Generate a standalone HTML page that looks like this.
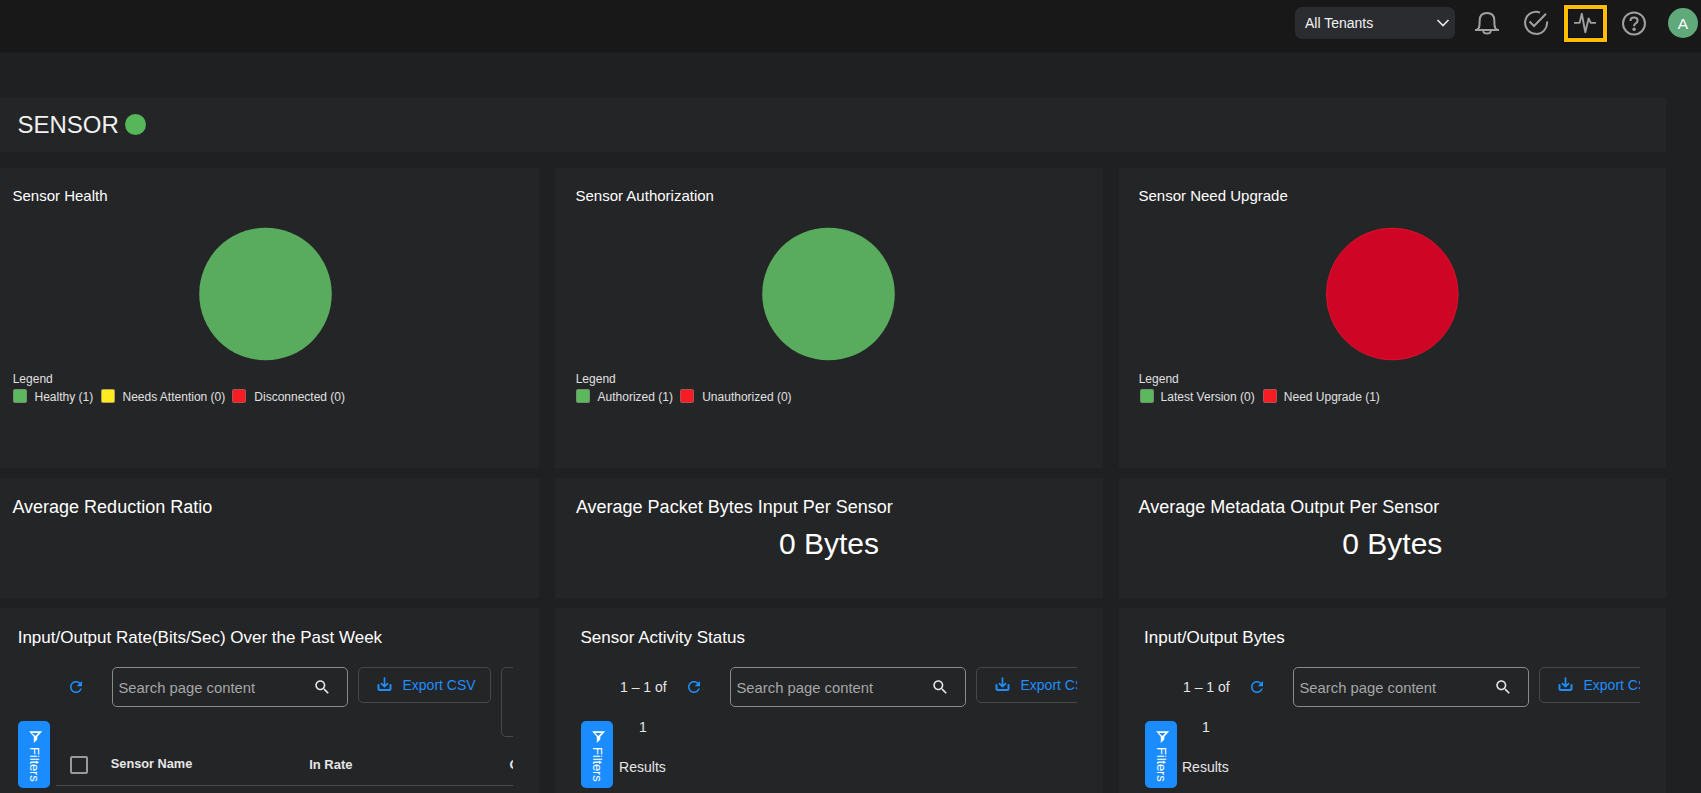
<!DOCTYPE html>
<html><head><meta charset="utf-8">
<style>
*{box-sizing:border-box;margin:0;padding:0}
html,body{width:1701px;height:793px;overflow:hidden;background:#1f2022;font-family:"Liberation Sans",sans-serif;color:#fff}
.a{position:absolute}
.t{position:absolute;white-space:nowrap;line-height:1}
#top{left:0;top:0;width:1701px;height:52px;background:#181818;box-shadow:0 1px 0 #1c1d1e}
#band{left:0;top:98px;width:1666px;height:54px;background:#242527}
.p{position:absolute;background:#242527;overflow:hidden}
.pie{position:absolute;border-radius:50%;width:133px;height:133px}
.sq{position:absolute;width:14px;height:14px;border:1px solid rgba(120,120,120,.6);border-radius:2px;top:388.5px}
.lg{font-size:12px;color:#e0e0e0}
.search{position:absolute;top:667px;width:236px;height:40px;border:1px solid #8a8a8a;border-radius:5px}
.exp{position:absolute;top:667px;height:36px;border:1px solid #46484c;border-radius:5px}
.filt{position:absolute;top:721px;width:32px;height:67px;background:#1b8cfe;border-radius:5px}
.blue{color:#1e8ffc}
</style></head><body>
<div id="top" class="a"></div>
<!-- tenant select -->
<div class="a" style="left:1295px;top:7px;width:160px;height:32px;background:#2b2c30;border-radius:7px"></div>
<div class="t" style="left:1305px;top:16px;font-size:14px;color:#f2f2f2">All Tenants</div>
<svg class="a" style="left:1435px;top:17px" width="16" height="12" viewBox="0 0 16 12"><path d="M2.5 3 L8 8.5 L13.5 3" fill="none" stroke="#e8e8e8" stroke-width="1.6"/></svg>
<!-- bell -->
<svg class="a" style="left:1465px;top:0px" width="40" height="40" viewBox="0 0 40 40"><path d="M10 30 H34 M11.5 30 Q14.3 28.8 14.5 25 L14.7 20 Q14.9 12.9 22 12.9 Q29.1 12.9 29.3 20 L29.5 25 Q29.7 28.8 32.5 30 M18.2 30.6 Q18.2 33.6 22 33.6 Q25.8 33.6 25.8 30.6" fill="none" stroke="#a0a0a0" stroke-width="2" stroke-linejoin="round"/></svg>
<!-- check circle -->
<svg class="a" style="left:1523px;top:10px" width="26" height="26" viewBox="0 0 26 26"><path d="M17 2.6 A11 11 0 1 0 24 11.5" fill="none" stroke="#a0a0a0" stroke-width="2"/><path d="M6.5 11.5 L11 16 L23 3.8" fill="none" stroke="#a0a0a0" stroke-width="2"/></svg>
<!-- pulse focused -->
<div class="a" style="left:1563px;top:4px;width:45px;height:39px;border:1px solid #0b0d18"></div>
<div class="a" style="left:1564px;top:5px;width:43px;height:37px;border:4px solid #ffbf00"></div><div class="a" style="left:1568px;top:9px;width:35px;height:29px;border:1px solid #0b0d1a"></div>
<svg class="a" style="left:1573px;top:12px" width="24" height="22" viewBox="0 0 24 22"><path d="M1 10.9 L6.6 10.9 L8.8 1.8 L12.3 20.2 L15.6 6.5 L17.8 10.9 L23 10.9" fill="none" stroke="#a0a0a0" stroke-width="1.9" stroke-linejoin="round"/></svg>
<!-- help -->
<svg class="a" style="left:1621px;top:10px" width="26" height="26" viewBox="0 0 26 26"><circle cx="13" cy="13.4" r="11" fill="none" stroke="#a0a0a0" stroke-width="2"/><path d="M9.5 10.9 Q9.5 7.5 13.1 7.5 Q16.6 7.5 16.6 10.5 Q16.6 12.3 14.7 13.3 Q13.1 14.1 13.1 16.3" fill="none" stroke="#a0a0a0" stroke-width="2"/><circle cx="13.1" cy="19.3" r="1.7" fill="#a0a0a0"/></svg>
<!-- avatar -->
<div class="a" style="left:1668px;top:8px;width:30px;height:30px;border-radius:50%;background:#5fa97b"></div>
<div class="t" style="left:1668px;top:15.5px;width:30px;text-align:center;font-size:15.5px;color:#fff">A</div>

<div id="band" class="a"></div>
<div class="t" style="left:17.5px;top:112.5px;font-size:24px;color:#f0f0f0">SENSOR</div>
<div class="a" style="left:125px;top:114px;width:21px;height:21px;border-radius:50%;background:#56b65a"></div>

<!-- row 1 -->
<div class="p" style="left:-8px;top:168px;width:547.33px;height:300px"></div>
<div class="p" style="left:555.33px;top:168px;width:547.33px;height:300px"></div>
<div class="p" style="left:1118.67px;top:168px;width:547.33px;height:300px"></div>

<div class="t" style="left:12.5px;top:187.9px;font-size:15px">Sensor Health</div>
<div class="t" style="left:575.5px;top:187.9px;font-size:15px">Sensor Authorization</div>
<div class="t" style="left:1138.5px;top:187.9px;font-size:15px">Sensor Need Upgrade</div>

<svg class="a" style="left:0;top:200px" width="1701" height="190" viewBox="0 200 1701 190"><circle cx="265.5" cy="294" r="66.3" fill="#59ab5d"/><circle cx="828.5" cy="294" r="66.3" fill="#59ab5d"/><circle cx="1392.3" cy="294" r="65.9" fill="#cf0526" stroke="#e3132b" stroke-width="0.8"/></svg>

<div class="t lg" style="left:12.7px;top:372.5px">Legend</div>
<div class="sq" style="left:12.5px;background:#5cb85c"></div>
<div class="t lg" style="left:34.5px;top:390.5px">Healthy (1)</div>
<div class="sq" style="left:100.5px;background:#ffeb1f"></div>
<div class="t lg" style="left:122.5px;top:390.5px">Needs Attention (0)</div>
<div class="sq" style="left:232.3px;background:#f51c24"></div>
<div class="t lg" style="left:254.3px;top:390.5px">Disconnected (0)</div>

<div class="t lg" style="left:575.7px;top:372.5px">Legend</div>
<div class="sq" style="left:575.6px;background:#5cb85c"></div>
<div class="t lg" style="left:597.6px;top:390.5px">Authorized (1)</div>
<div class="sq" style="left:680.2px;background:#f51c24"></div>
<div class="t lg" style="left:702.2px;top:390.5px">Unauthorized (0)</div>

<div class="t lg" style="left:1138.7px;top:372.5px">Legend</div>
<div class="sq" style="left:1139.6px;background:#5cb85c"></div>
<div class="t lg" style="left:1160.6px;top:390.5px">Latest Version (0)</div>
<div class="sq" style="left:1262.8px;background:#f51c24"></div>
<div class="t lg" style="left:1283.8px;top:390.5px">Need Upgrade (1)</div>

<!-- row 2 -->
<div class="p" style="left:-8px;top:478px;width:547.33px;height:120px"></div>
<div class="p" style="left:555.33px;top:478px;width:547.33px;height:120px"></div>
<div class="p" style="left:1118.67px;top:478px;width:547.33px;height:120px"></div>
<div class="t" style="left:12.4px;top:497.8px;font-size:18px">Average Reduction Ratio</div>
<div class="t" style="left:575.9px;top:497.8px;font-size:18px">Average Packet Bytes Input Per Sensor</div>
<div class="t" style="left:1138.5px;top:497.8px;font-size:18px">Average Metadata Output Per Sensor</div>
<div class="t" style="left:555.33px;width:547.33px;text-align:center;top:528.6px;font-size:30px">0 Bytes</div>
<div class="t" style="left:1118.67px;width:547.33px;text-align:center;top:528.6px;font-size:30px">0 Bytes</div>

<!-- row 3 -->
<div class="p" style="left:-8px;top:608px;width:547.33px;height:200px"></div>
<div class="p" style="left:555.33px;top:608px;width:547.33px;height:200px"></div>
<div class="p" style="left:1118.67px;top:608px;width:547.33px;height:200px"></div>
<div class="t" style="left:17.7px;top:628.6px;font-size:17px">Input/Output Rate(Bits/Sec) Over the Past Week</div>
<div class="t" style="left:580.5px;top:628.6px;font-size:17px">Sensor Activity Status</div>
<div class="t" style="left:1144px;top:628.6px;font-size:17px">Input/Output Bytes</div>

<!-- ROW3 -->
<div class="a" style="left:0;top:600px;width:513px;height:193px;overflow:hidden">
<div class="a" style="left:0;top:-600px;width:1701px;height:793px">
<svg class="a" style="left:67px;top:678px" width="18" height="18" viewBox="0 0 24 24"><path d="M17.65 6.35C16.2 4.9 14.21 4 12 4c-4.42 0-7.990 3.58-7.99 8s3.57 8 7.99 8c3.73 0 6.84-2.55 7.73-6h-2.08c-.82 2.33-3.04 4-5.65 4-3.310 0-6-2.69-6-6s2.69-6 6-6c1.66 0 3.14.69 4.22 1.78L13 11h7V4l-2.35 2.35z" fill="#1e8ffc"/></svg>
<div class="search" style="left:112px"></div><div class="t" style="left:118.5px;top:680.8px;font-size:14.8px;color:#a6a6a6">Search page content</div><svg class="a" style="left:313px;top:677.7px" width="18.5" height="18.5" viewBox="0 0 24 24"><path d="M15.5 14h-.79l-.28-.27C15.41 12.59 16 11.11 16 9.5 16 5.91 13.09 3 9.5 3S3 5.91 3 9.5 5.91 16 9.5 16c1.61 0 3.09-.59 4.230-1.57l.27.28v.79l5 4.99L20.49 19l-4.99-5zm-6 0C7.01 14 5 11.99 5 9.5S7.01 5 9.5 5 14 7.01 14 9.5 11.99 14 9.5 14z" fill="#e6e6e6"/></svg>
<div class="exp" style="left:358px;width:133px"></div>
<svg class="a" style="left:377px;top:677px" width="15" height="15" viewBox="0 0 15 15"><path d="M7.5 1 V9.4 M4.4 6.6 L7.5 9.6 L10.6 6.6" fill="none" stroke="#1e8ffc" stroke-width="1.7" stroke-linecap="round" stroke-linejoin="round"/><path d="M1.5 8 V11.5 Q1.5 13 3 13 H12 Q13.5 13 13.5 11.5 V8" fill="none" stroke="#1e8ffc" stroke-width="2" stroke-linecap="round" stroke-linejoin="round"/></svg>
<div class="t blue" style="left:402.5px;top:678.2px;font-size:14px">Export CSV</div>
<div class="exp" style="left:501px;width:60px;height:70px"></div>
<div class="a" style="left:70px;top:756px;width:18px;height:18px;border:2px solid #9a9a9a;border-radius:2px"></div>
<div class="t" style="left:110.8px;top:758px;font-size:12.75px;font-weight:bold;color:#e6e6e6">Sensor Name</div>
<div class="t" style="left:309.2px;top:758px;font-size:13px;font-weight:bold;color:#e6e6e6">In Rate</div>
<div class="t" style="left:509.5px;top:758px;font-size:13px;font-weight:bold;color:#e6e6e6">Out Rate</div>
<div class="a" style="left:56px;top:785px;width:460px;height:1px;background:#4a4b4e"></div>
</div></div>
<div class="filt" style="left:18px"></div><svg class="a" style="left:28.5px;top:730px" width="14" height="14" viewBox="0 0 14 14"><path fill-rule="evenodd" d="M0.1 1.2 H13.2 L8.3 6.7 V9.6 L4.8 12.9 V6.7 Z M3.0 3.1 H9.5 L6.25 6.0 Z" fill="#fff"/></svg><div class="t" style="left:33.5px;top:747px;font-size:13px;letter-spacing:-0.1px;color:#fff;transform-origin:0 0;transform:rotate(90deg) translate(0,-7px)">Filters</div>
<div class="a" style="left:555px;top:600px;width:522px;height:193px;overflow:hidden">
<div class="a" style="left:-555px;top:-600px;width:1701px;height:793px">
<div class="t" style="left:620px;top:679.8px;font-size:14px;color:#e6e6e6">1 – 1 of</div><svg class="a" style="left:685px;top:678px" width="18" height="18" viewBox="0 0 24 24"><path d="M17.65 6.35C16.2 4.9 14.21 4 12 4c-4.42 0-7.990 3.58-7.99 8s3.57 8 7.99 8c3.73 0 6.84-2.55 7.73-6h-2.08c-.82 2.33-3.04 4-5.65 4-3.310 0-6-2.69-6-6s2.69-6 6-6c1.66 0 3.14.69 4.22 1.78L13 11h7V4l-2.35 2.35z" fill="#1e8ffc"/></svg><div class="search" style="left:730px"></div><div class="t" style="left:736.5px;top:680.8px;font-size:14.8px;color:#a6a6a6">Search page content</div><svg class="a" style="left:931px;top:677.7px" width="18.5" height="18.5" viewBox="0 0 24 24"><path d="M15.5 14h-.79l-.28-.27C15.41 12.59 16 11.11 16 9.5 16 5.91 13.09 3 9.5 3S3 5.91 3 9.5 5.91 16 9.5 16c1.61 0 3.09-.59 4.230-1.57l.27.28v.79l5 4.99L20.49 19l-4.99-5zm-6 0C7.01 14 5 11.99 5 9.5S7.01 5 9.5 5 14 7.01 14 9.5 11.99 14 9.5 14z" fill="#e6e6e6"/></svg>
<div class="exp" style="left:976px;width:133px"></div>
<svg class="a" style="left:995px;top:677px" width="15" height="15" viewBox="0 0 15 15"><path d="M7.5 1 V9.4 M4.4 6.6 L7.5 9.6 L10.6 6.6" fill="none" stroke="#1e8ffc" stroke-width="1.7" stroke-linecap="round" stroke-linejoin="round"/><path d="M1.5 8 V11.5 Q1.5 13 3 13 H12 Q13.5 13 13.5 11.5 V8" fill="none" stroke="#1e8ffc" stroke-width="2" stroke-linecap="round" stroke-linejoin="round"/></svg>
<div class="t blue" style="left:1020.5px;top:678.2px;font-size:14px">Export CSV</div>
</div></div>
<div class="filt" style="left:581px"></div><svg class="a" style="left:591.5px;top:730px" width="14" height="14" viewBox="0 0 14 14"><path fill-rule="evenodd" d="M0.1 1.2 H13.2 L8.3 6.7 V9.6 L4.8 12.9 V6.7 Z M3.0 3.1 H9.5 L6.25 6.0 Z" fill="#fff"/></svg><div class="t" style="left:596.5px;top:747px;font-size:13px;letter-spacing:-0.1px;color:#fff;transform-origin:0 0;transform:rotate(90deg) translate(0,-7px)">Filters</div>
<div class="t" style="left:555px;width:176px;text-align:center;top:720.2px;font-size:14px;color:#e6e6e6">1</div>
<div class="t" style="left:619.1px;top:760.2px;font-size:14px;color:#e6e6e6">Results</div>
<div class="a" style="left:1118px;top:600px;width:522px;height:193px;overflow:hidden">
<div class="a" style="left:-1118px;top:-600px;width:1701px;height:793px">
<div class="t" style="left:1183px;top:679.8px;font-size:14px;color:#e6e6e6">1 – 1 of</div><svg class="a" style="left:1248px;top:678px" width="18" height="18" viewBox="0 0 24 24"><path d="M17.65 6.35C16.2 4.9 14.21 4 12 4c-4.42 0-7.990 3.58-7.99 8s3.57 8 7.99 8c3.73 0 6.84-2.55 7.73-6h-2.08c-.82 2.33-3.04 4-5.65 4-3.310 0-6-2.69-6-6s2.69-6 6-6c1.66 0 3.14.69 4.22 1.78L13 11h7V4l-2.35 2.35z" fill="#1e8ffc"/></svg><div class="search" style="left:1293px"></div><div class="t" style="left:1299.5px;top:680.8px;font-size:14.8px;color:#a6a6a6">Search page content</div><svg class="a" style="left:1494px;top:677.7px" width="18.5" height="18.5" viewBox="0 0 24 24"><path d="M15.5 14h-.79l-.28-.27C15.41 12.59 16 11.11 16 9.5 16 5.91 13.09 3 9.5 3S3 5.91 3 9.5 5.91 16 9.5 16c1.61 0 3.09-.59 4.230-1.57l.27.28v.79l5 4.99L20.49 19l-4.99-5zm-6 0C7.01 14 5 11.99 5 9.5S7.01 5 9.5 5 14 7.01 14 9.5 11.99 14 9.5 14z" fill="#e6e6e6"/></svg>
<div class="exp" style="left:1539px;width:133px"></div>
<svg class="a" style="left:1558px;top:677px" width="15" height="15" viewBox="0 0 15 15"><path d="M7.5 1 V9.4 M4.4 6.6 L7.5 9.6 L10.6 6.6" fill="none" stroke="#1e8ffc" stroke-width="1.7" stroke-linecap="round" stroke-linejoin="round"/><path d="M1.5 8 V11.5 Q1.5 13 3 13 H12 Q13.5 13 13.5 11.5 V8" fill="none" stroke="#1e8ffc" stroke-width="2" stroke-linecap="round" stroke-linejoin="round"/></svg>
<div class="t blue" style="left:1583.5px;top:678.2px;font-size:14px">Export CSV</div>
</div></div>
<div class="filt" style="left:1145px"></div><svg class="a" style="left:1155.5px;top:730px" width="14" height="14" viewBox="0 0 14 14"><path fill-rule="evenodd" d="M0.1 1.2 H13.2 L8.3 6.7 V9.6 L4.8 12.9 V6.7 Z M3.0 3.1 H9.5 L6.25 6.0 Z" fill="#fff"/></svg><div class="t" style="left:1160.5px;top:747px;font-size:13px;letter-spacing:-0.1px;color:#fff;transform-origin:0 0;transform:rotate(90deg) translate(0,-7px)">Filters</div>
<div class="t" style="left:1118px;width:176px;text-align:center;top:720.2px;font-size:14px;color:#e6e6e6">1</div>
<div class="t" style="left:1182px;top:760.2px;font-size:14px;color:#e6e6e6">Results</div>
</body></html>
